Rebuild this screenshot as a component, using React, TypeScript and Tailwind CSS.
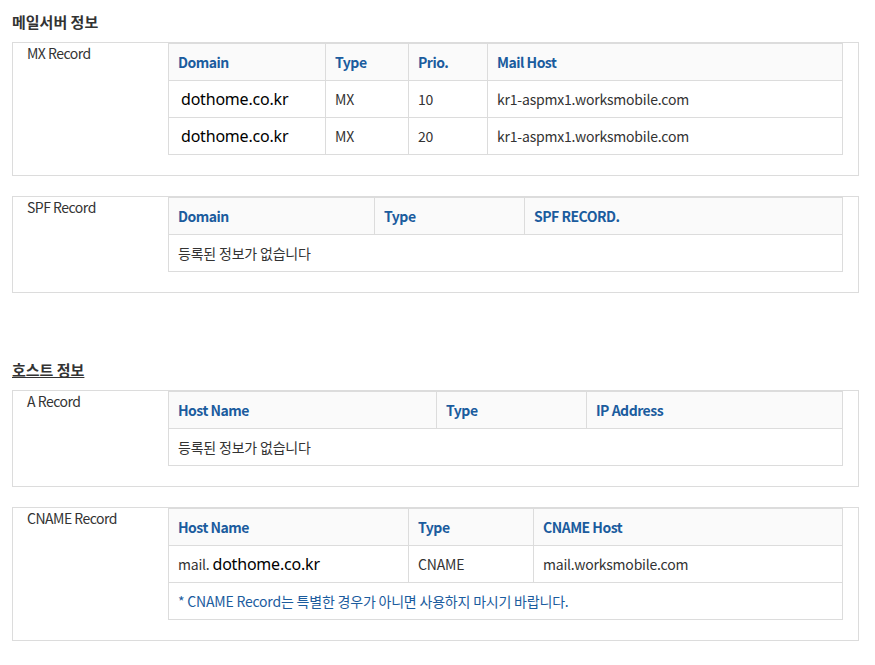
const F = { fontFamily: '"Liberation Sans","Noto Sans CJK KR",sans-serif' };
const K = { fontFamily: '"Noto Sans CJK KR",sans-serif' };
const D = { fontFamily: '"Noto Sans","DejaVu Sans",sans-serif' };

function Box({ label, cols, rows, first }: { label: string; cols: [string, number][]; rows: React.ReactNode[][]; first?: boolean }) {
  return (
    <div className={`border border-[#dcdcdc] flex pb-[20px] ${first ? "" : "mt-[20px]"}`}>
      <div className="w-[155px] shrink-0 pl-[14px] text-[14px] text-[#333] tracking-[-0.5px] leading-[20px]" style={K}>{label}</div>
      <table className="w-[675px] border-collapse text-[14px] text-[#333]" style={K}>
        <thead>
          <tr className="h-[37px] bg-[#fafafa]">
            {cols.map(([c, w]) => (
              <th key={c} style={{ width: w }} className="border border-[#dcdcdc] text-left px-[9px] font-bold text-[#1b5c9e] tracking-[-0.5px]">{c}</th>
            ))}
          </tr>
        </thead>
        <tbody>
          {rows.map((r, i) => (
            <tr key={i} className="h-[37px]">
              {r.map((c, j) => (
                <td key={j} colSpan={r.length === 1 ? cols.length : 1} className="border border-[#dcdcdc] px-[9px] tracking-[-0.2px]">{c}</td>
              ))}
            </tr>
          ))}
        </tbody>
      </table>
    </div>
  );
}

const dom = <span className="text-[16px] text-black" style={D}>dothome.co.kr</span>;

export default function App() {
  return (
    <div className="bg-white w-[875px] h-[665px] px-[12px] pt-[12px] pr-[16px]" style={F}>
      <h2 className="text-[15px] font-bold text-[#333] mb-[10px] leading-[20px]" style={K}>메일서버 정보</h2>
      <Box first label="MX Record" cols={[["Domain", 157], ["Type", 83], ["Prio.", 79], ["Mail Host", 355]]}
        rows={[[<span className="pl-[3px]">{dom}</span>, "MX", "10", "kr1-aspmx1.worksmobile.com"], [<span className="pl-[3px]">{dom}</span>, "MX", "20", "kr1-aspmx1.worksmobile.com"]]} />
      <Box label="SPF Record" cols={[["Domain", 206], ["Type", 150], ["SPF RECORD.", 318]]} rows={[["등록된 정보가 없습니다"]]} />
      <h2 className="text-[15px] font-bold text-[#333] mt-[67px] mb-[10px] leading-[20px] underline" style={K}>호스트 정보</h2>
      <Box first label="A Record" cols={[["Host Name", 268], ["Type", 150], ["IP Address", 256]]} rows={[["등록된 정보가 없습니다"]]} />
      <Box label="CNAME Record" cols={[["Host Name", 240], ["Type", 125], ["CNAME Host", 309]]}
        rows={[[<>mail. {dom}</>, "CNAME", "mail.worksmobile.com"], [<span className="text-[#1b5c9e]">* CNAME Record는 특별한 경우가 아니면 사용하지 마시기 바랍니다.</span>]]} />
    </div>
  );
}
